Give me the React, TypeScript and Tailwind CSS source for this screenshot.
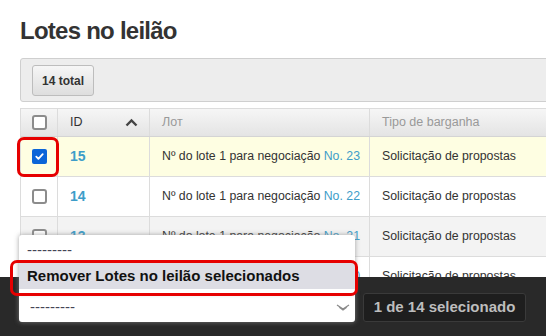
import { ReactNode } from 'react';

type Lot = { id: number; num: number; checked?: boolean };

const lots: Lot[] = [
  { id: 15, num: 23, checked: true },
  { id: 14, num: 22 },
  { id: 13, num: 21 },
  { id: 12, num: 20 },
];

function Checkbox({ checked }: { checked?: boolean }) {
  if (checked) {
    return (
      <span className="flex h-[15px] w-[15px] items-center justify-center rounded-[2px] bg-[#0b65d8]">
        <svg width="11" height="11" viewBox="0 0 12 12">
          <path d="M2.5 6.2l2.3 2.3 4.7-5" fill="none" stroke="#fff" strokeWidth="2" strokeLinecap="round" strokeLinejoin="round" />
        </svg>
      </span>
    );
  }
  return <span className="block h-[15px] w-[15px] rounded-[3px] border-2 border-[#8c8c8c] bg-white" />;
}

function Cell({ w, children, last }: { w: string; children?: ReactNode; last?: boolean }) {
  return (
    <div className={`${w} flex shrink-0 items-center ${last ? '' : 'border-r border-[#dcdcdc]'}`}>
      {children}
    </div>
  );
}

export default function App() {
  return (
    <div className="relative h-[336px] w-[546px] overflow-hidden bg-white font-['Liberation_Sans',Arial,sans-serif] text-[#333]">
      <div className="w-[620px] pl-5 pt-[18px]">
        <h1 className="text-[24px] font-bold leading-[26px] tracking-[-0.75px] text-[#333]">Lotes no leilão</h1>

        {/* Toolbar */}
        <div className="mt-[14px] flex h-[44px] items-start rounded-[3px] border border-[#cfcfcf] bg-[#ededed] pl-[11px] pt-[6px]">
          <button
            type="button"
            className="h-[31px] w-[62px] rounded-[3px] border border-[#bdbdbd] bg-gradient-to-b from-[#f6f6f6] to-[#dedede] text-[12px] font-bold text-[#333]"
          >
            14 total
          </button>
        </div>

        {/* Table */}
        <div className="mt-[6px] border-l border-t border-[#dcdcdc]">
          <div className="flex h-[28px] border-b border-[#d4d4d4] bg-gradient-to-b from-[#f6f6f6] to-[#e4e4e4] text-[12.5px]">
            <Cell w="w-[37px] justify-center">
              <Checkbox />
            </Cell>
            <Cell w="w-[92px] justify-between pl-3 pr-[11px]">
              <span className="text-[#333]">ID</span>
              <svg width="13" height="9" viewBox="0 0 13 9">
                <path d="M1.5 7.5l5-5 5 5" fill="none" stroke="#444" strokeWidth="2.4" />
              </svg>
            </Cell>
            <Cell w="w-[220px] pl-3">
              <span className="text-[#999]">Лот</span>
            </Cell>
            <Cell w="w-[250px] pl-3" last>
              <span className="text-[#999]">Tipo de barganha</span>
            </Cell>
          </div>

          {lots.map((lot, i) => (
            <div
              key={lot.id}
              className={`flex h-[40px] border-b border-[#dcdcdc] text-[12.3px] ${
                lot.checked ? 'bg-[#fefee2]' : i % 2 === 0 ? 'bg-[#f3f3f3]' : 'bg-white'
              }`}
            >
              <Cell w="w-[37px] justify-center">
                <Checkbox checked={lot.checked} />
              </Cell>
              <Cell w="w-[92px] pl-3">
                <span className="text-[14px] font-bold text-[#3d9dc9]">{lot.id}</span>
              </Cell>
              <Cell w="w-[220px] pl-3">
                <span className="whitespace-nowrap">
                  Nº do lote 1 para negociação <span className="text-[#3d9dc9]">No. {lot.num}</span>
                </span>
              </Cell>
              <Cell w="w-[250px] pl-3" last>
                <span>Solicitação de propostas</span>
              </Cell>
            </div>
          ))}
        </div>
      </div>

      {/* Action bar */}
      <div className="absolute bottom-0 left-0 right-0 top-[277px] flex items-start gap-2 bg-[#292929] pl-[19px] pt-[16px]">
        <div className="flex h-[29px] w-[336px] items-center justify-between rounded-b-[3px] bg-white pl-[11px] pr-[5px] shadow-[0_0_5px_rgba(140,140,140,0.8)]">
          <span className="text-[15px] text-[#445]">---------</span>
          <svg width="14" height="8" viewBox="0 0 14 8">
            <path d="M1 1l6 4 6-4M3 3l4 3 4-3" fill="none" stroke="#8a8a8a" strokeWidth="1.3" />
          </svg>
        </div>
        <button
          type="button"
          className="h-[29px] w-[163px] rounded-[3px] border border-[#3a3a3a] bg-[#1e1e1e] text-[15px] font-bold text-[#bdbdbd]"
        >
          1 de 14 selecionado
        </button>
      </div>

      {/* Open dropdown list */}
      <div className="absolute left-[19px] top-[235px] w-[336px] rounded-t-[3px] bg-white pt-[2px] pb-[4px] shadow-[0_0_5px_rgba(140,140,140,0.8)]">
        <div className="flex h-[26px] items-center pl-[8px] text-[15px] text-[#445]">---------</div>
        <div className="flex h-[26px] items-center bg-[#dddde4] pl-[8px] text-[15px] font-bold text-[#111]">
          Remover Lotes no leilão selecionados
        </div>
      </div>

      {/* Highlight marks */}
      <div className="absolute left-[17px] top-[137px] h-[40px] w-[42px] rounded-[7px] border-[3px] border-[#e60000]" />
      <div className="absolute left-[10px] top-[260px] h-[36px] w-[348px] rounded-[7px] border-[3px] border-[#e60000]" />
    </div>
  );
}
